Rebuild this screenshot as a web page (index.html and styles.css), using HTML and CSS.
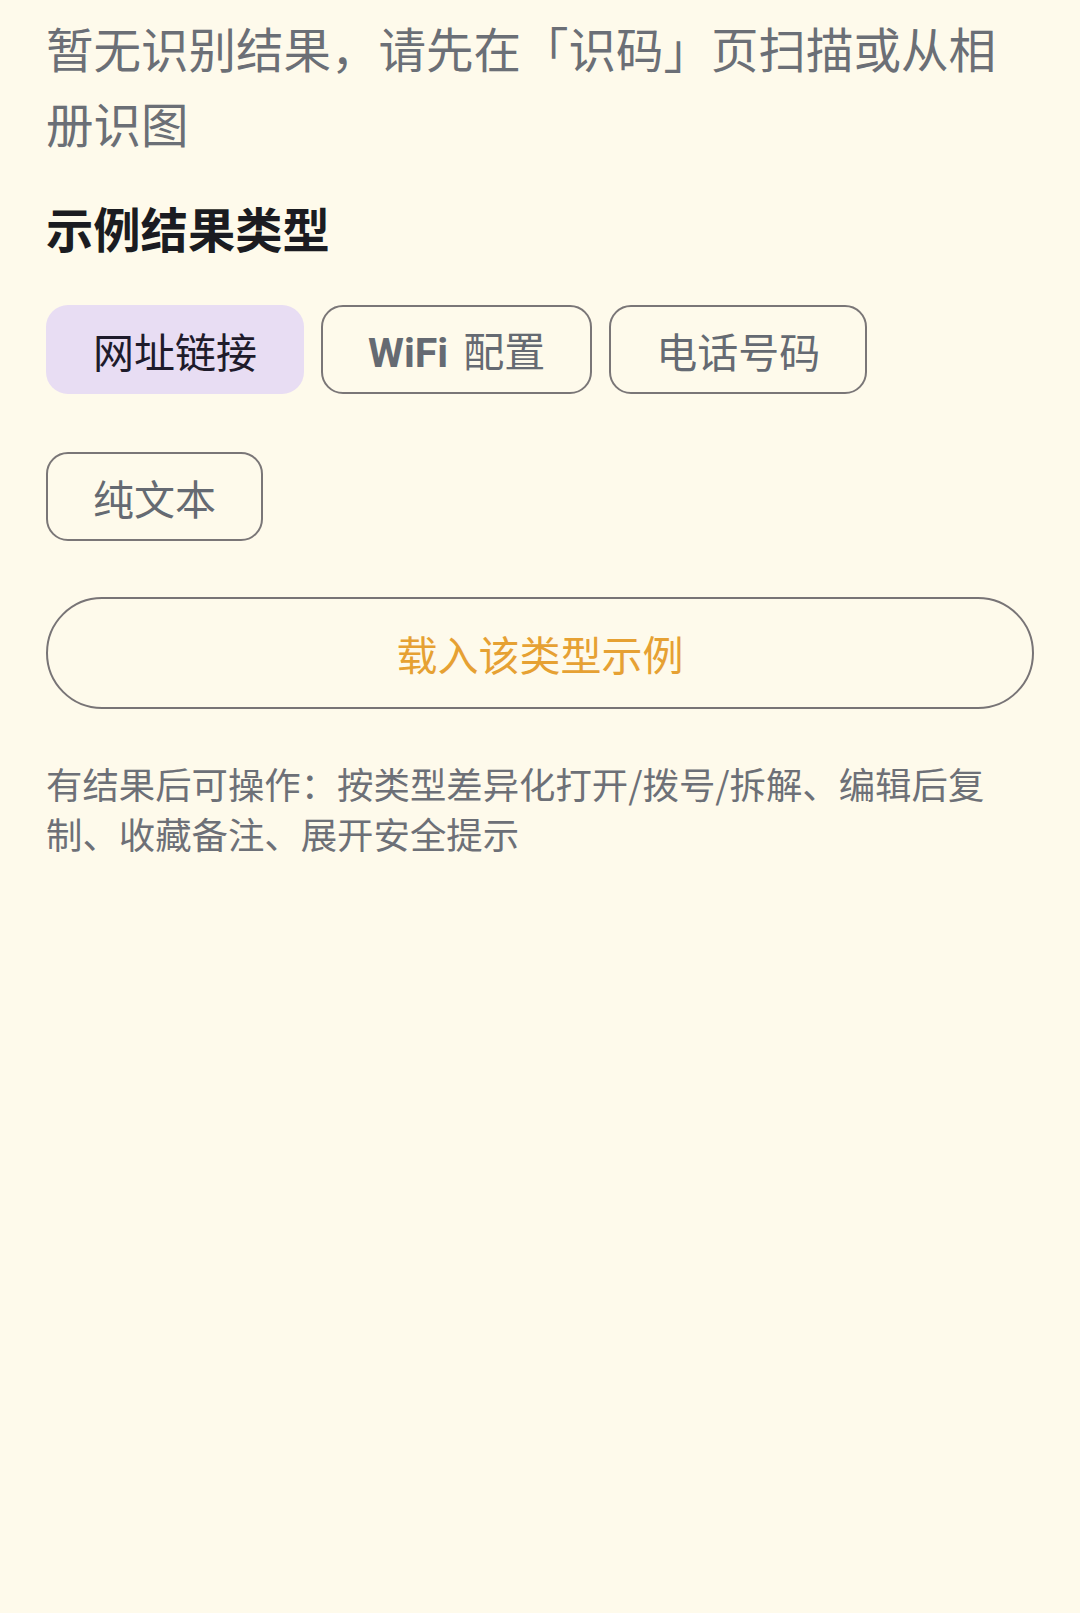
FILE: index.html
```html
<!DOCTYPE html>
<html lang="zh-CN">
<head>
<meta charset="utf-8">
<title>识别结果</title>
<link rel="stylesheet" href="styles.css">
</head>
<body>
<main class="page">
  <p class="notice">暂无识别结果，请先在「识码」页扫描或从相册识图</p>
  <h2 class="heading">示例结果类型</h2>
  <div class="chips">
    <button class="chip active">网址链接</button>
    <button class="chip"><span class="latin">WiFi</span> 配置</button>
    <button class="chip">电话号码</button>
    <button class="chip">纯文本</button>
  </div>
  <button class="load">载入该类型示例</button>
  <p class="hint">有结果后可操作：按类型差异化打开/拨号/拆解、编辑后复制、收藏备注、展开安全提示</p>
</main>
</body>
</html>
```

FILE: styles.css
```css
html, body {
  margin: 0;
  padding: 0;
  background: #fefaeb;
}
body {
  font-family: "Noto Sans CJK SC", "Noto Sans", sans-serif;
  min-height: 1613px;
}
.page {
  padding: 10px 46px 40px;
}
.notice {
  margin: 0;
  font-size: 47.5px;
  line-height: 75px;
  color: #6b6f76;
}
.heading {
  margin: 35px 0 0;
  font-size: 47.3px;
  line-height: 66px;
  font-weight: 700;
  color: #1b1c21;
}
.chips {
  display: flex;
  flex-wrap: wrap;
  column-gap: 17px;
  row-gap: 58px;
  margin-top: 44px;
}
.chip {
  box-sizing: border-box;
  display: block;
  height: 89px;
  padding: 0 45px;
  border: 2.5px solid #7a7677;
  border-radius: 22px;
  background: transparent;
  font-family: "Noto Sans CJK SC", sans-serif;
  font-size: 41px;
  line-height: 84px;
  white-space: nowrap;
  color: #656a72;
}
.chip .latin {
  font-family: Roboto, "Noto Sans", sans-serif;
  font-weight: 700;
  margin-right: 6px;
}
.chip.active {
  background: #e8ddf3;
  border-color: transparent;
  color: #1e1b2b;
}
.load {
  box-sizing: border-box;
  display: block;
  width: 100%;
  height: 112px;
  margin-top: 56px;
  border: 2.5px solid #787476;
  border-radius: 56px;
  background: transparent;
  font-family: "Noto Sans CJK SC", sans-serif;
  font-size: 41px;
  color: #e6a133;
}
.hint {
  margin: 49px 0 0;
  font-size: 36.4px;
  line-height: 50px;
  color: #6d7077;
}
```
